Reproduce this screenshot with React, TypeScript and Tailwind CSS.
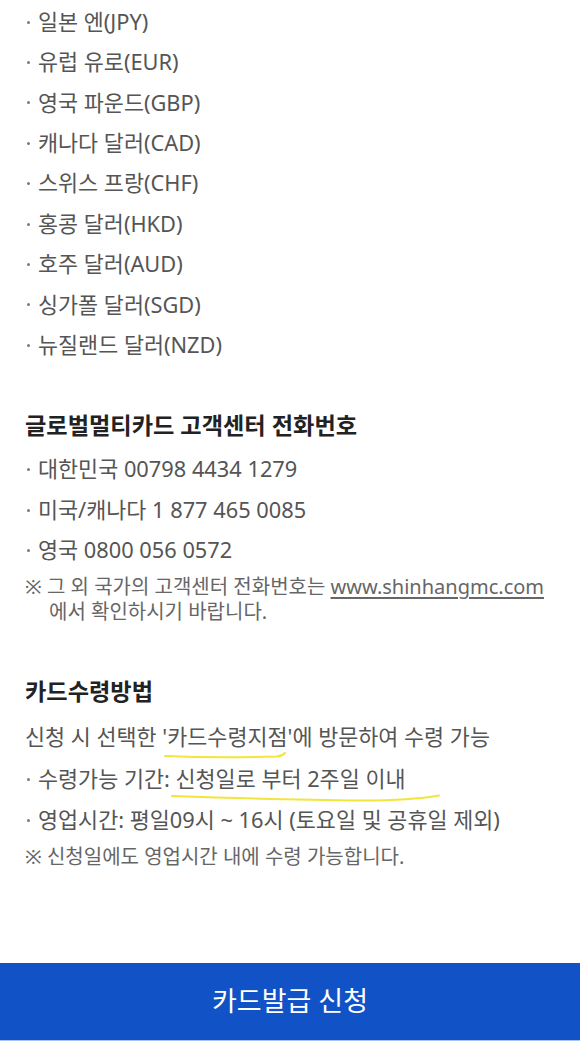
import React from "react";

const currencies = [
  "일본 엔(JPY)",
  "유럽 유로(EUR)",
  "영국 파운드(GBP)",
  "캐나다 달러(CAD)",
  "스위스 프랑(CHF)",
  "홍콩 달러(HKD)",
  "호주 달러(AUD)",
  "싱가폴 달러(SGD)",
  "뉴질랜드 달러(NZD)",
];

const phones = ["대한민국 00798 4434 1279", "미국/캐나다 1 877 465 0085", "영국 0800 056 0572"];

function Bullet({ children, lh }: { children: React.ReactNode; lh: string }) {
  return (
    <li className={`flex items-center ${lh}`}>
      <span className="ml-[2px] mr-[8px] h-[3px] w-[3px] shrink-0 rounded-full bg-[#7a7a7a]" />
      <span>{children}</span>
    </li>
  );
}

// hand-drawn looking yellow underline
function Marker({ children, d, w, left }: { children: React.ReactNode; d: string; w: number; left: string }) {
  return (
    <span className="relative inline-block">
      {children}
      <svg
        className={`pointer-events-none absolute top-1/2 mt-[13px] overflow-visible ${left}`}
        width={w}
        height="10"
        viewBox={`0 0 ${w} 10`}
        fill="none"
      >
        <path d={d} stroke="#f3e53b" strokeWidth="2" strokeLinecap="round" />
      </svg>
    </span>
  );
}

export default function App() {
  return (
    <div
      className="min-h-[1046px] bg-white text-[#555]"
      style={{ fontFamily: '"Noto Sans", "Noto Sans CJK KR", sans-serif' }}
    >
      <div className="px-[25px]">
        <ul className="pt-[2px] text-[21.8px]">
          {currencies.map((c) => (
            <Bullet key={c} lh="h-[40.4px]">
              {c}
            </Bullet>
          ))}
        </ul>

        <h2 className="mt-[43px] text-[23.2px] font-bold leading-[32px] text-[#222]">
          글로벌멀티카드 고객센터 전화번호
        </h2>
        <ul className="mt-[9px] text-[21.8px]">
          {phones.map((p) => (
            <Bullet key={p} lh="h-[40.5px]">
              {p}
            </Bullet>
          ))}
        </ul>
        <p className="mt-[3px] pl-[24px] indent-[-24px] text-[20px] leading-[25px] text-[#666]">
          ※ 그 외 국가의 고객센터 전화번호는{" "}
          <span className="underline underline-offset-[3px]">www.shinhangmc.com</span>
          <br />
          에서 확인하시기 바랍니다.
        </p>

        <h2 className="mt-[51px] text-[23.2px] font-bold leading-[32px] text-[#222]">카드수령방법</h2>
        <div className="mt-[10px] text-[21.8px]">
          <p className="flex h-[41.5px] items-center whitespace-pre">
            신청 시 선택한 '
            <Marker w={120} left="left-[-2px]" d="M0 5 C 35 6.5, 80 6.5, 112 5.5 C 116 5.2, 118 4, 120 2">
              카드수령지점
            </Marker>
            '에 방문하여 수령 가능
          </p>
          <ul>
            <Bullet lh="h-[41.5px]">
              <span className="whitespace-pre">
                수령가능 기간:{" "}
                <Marker w={267} left="left-[-4px]" d="M0 4 C 60 6, 130 8, 190 8.5 C 225 8.5, 250 6.5, 267 3.5">
                  신청일로 부터 2주일 이내
                </Marker>
              </span>
            </Bullet>
            <Bullet lh="h-[41.5px]">영업시간: 평일09시 ~ 16시 (토요일 및 공휴일 제외)</Bullet>
          </ul>
        </div>
        <p className="mt-[2px] text-[20px] leading-[25px] text-[#666]">※ 신청일에도 영업시간 내에 수령 가능합니다.</p>
      </div>

      <button className="mt-[94px] flex h-[78px] w-full items-center justify-center border-b border-[#a9c3ef] bg-[#1152c6] text-[27px] text-white">
        카드발급 신청
      </button>
    </div>
  );
}
